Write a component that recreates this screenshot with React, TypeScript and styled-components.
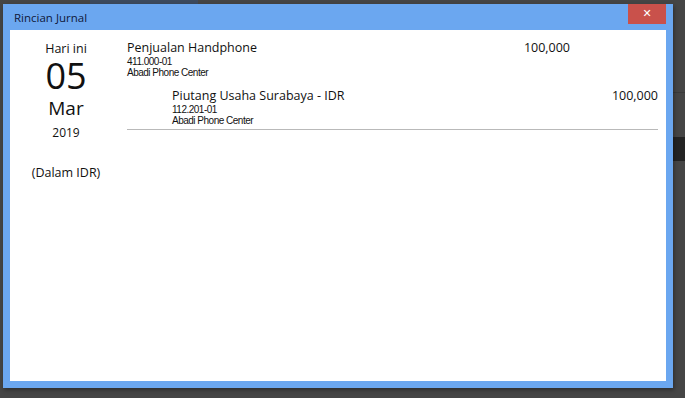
import styled, { createGlobalStyle } from "styled-components";

const GlobalStyle = createGlobalStyle`
  html, body {
    margin: 0;
    padding: 0;
    background: #464646;
    font-family: "Open Sans", "Noto Sans", "DejaVu Sans", sans-serif;
  }
`;

const Screen = styled.main`
  position: relative;
  width: 685px;
  height: 398px;
  overflow: hidden;
  background: #454545;
`;

const BackHeader = styled.div`
  display: flex;
  align-items: flex-end;
  height: 4px;
  overflow: hidden;
  padding-left: 90px;
  gap: 12px;
  .tab {
    width: 108px;
    height: 10px;
    margin-top: -6px;
    background: #3c4a5e;
  }
`;

const BackSide = styled.div`
  position: absolute;
  right: 0;
  top: 92px;
  width: 12px;
  display: flex;
  flex-direction: column;
  .italic {
    height: 44px;
    border-top: 1px solid #3a3a3a;
  }
  .bar {
    height: 24px;
    background: #232323;
  }
`;

const Dialog = styled.section`
  position: absolute;
  left: 3px;
  top: 4px;
  width: 670px;
  height: 384px;
  box-sizing: border-box;
  background: #6ba7f0;
  padding: 0 7px 7px 7px;
  display: flex;
  flex-direction: column;
  box-shadow: 1px 2px 4px rgba(0, 0, 0, 0.35);
`;

const TitleBar = styled.header`
  height: 26px;
  display: flex;
  align-items: center;
  justify-content: space-between;
  color: #10183a;
  font-size: 11.5px;
  padding-left: 4px;
`;

const CloseButton = styled.button`
  align-self: flex-start;
  width: 38px;
  height: 20px;
  border: none;
  padding: 0;
  background: #c9514b;
  color: #fff;
  font-family: "DejaVu Sans", sans-serif;
  font-size: 11px;
  line-height: 20px;
  cursor: pointer;
`;

const Body = styled.div`
  flex: 1;
  background: #fff;
  display: flex;
  padding-right: 8px;
`;

const DateColumn = styled.aside`
  width: 112px;
  display: flex;
  flex-direction: column;
  align-items: center;
  color: #111;
  padding-top: 13px;
`;

const Label = styled.div<{ $size: number; $mt?: number }>`
  font-size: ${(p) => p.$size}px;
  line-height: 1;
  margin-top: ${(p) => p.$mt ?? 0}px;
`;

const Entries = styled.div`
  flex: 1;
  margin-left: 5px;
  padding-top: 9px;
  padding-bottom: 3px;
  align-self: flex-start;
  display: flex;
  flex-direction: column;
  gap: 9px;
  border-bottom: 1px solid #b9b9b9;
`;

const EntryRow = styled.div<{ $indent: number }>`
  display: grid;
  grid-template-columns: 1fr 88px 88px;
  color: #111;
  .account {
    padding-left: ${(p) => p.$indent}px;
  }
  .name {
    font-size: 12.5px;
    line-height: 17px;
  }
  .sub {
    font-family: "Liberation Sans", Arial, sans-serif;
    font-size: 10px;
    line-height: 11px;
    letter-spacing: -0.5px;
  }
  .amount {
    font-size: 12.5px;
    line-height: 17px;
    text-align: right;
  }
`;

type Entry = {
  name: string;
  code: string;
  branch: string;
  debit?: string;
  credit?: string;
  indent: number;
};

const entries: Entry[] = [
  {
    name: "Penjualan Handphone",
    code: "411.000-01",
    branch: "Abadi Phone Center",
    debit: "100,000",
    indent: 0,
  },
  {
    name: "Piutang Usaha Surabaya - IDR",
    code: "112.201-01",
    branch: "Abadi Phone Center",
    credit: "100,000",
    indent: 45,
  },
];

function App() {
  return (
    <Screen>
      <GlobalStyle />
      <BackHeader>
        <div className="tab" />
      </BackHeader>
      <BackSide>
        <div className="italic" />
        <div className="bar" />
      </BackSide>
      <Dialog>
        <TitleBar>
          <span>Rincian Jurnal</span>
          <CloseButton aria-label="Tutup">✕</CloseButton>
        </TitleBar>
        <Body>
          <DateColumn>
            <Label $size={12.5}>Hari ini</Label>
            <Label $size={36} $mt={2}>05</Label>
            <Label $size={19} $mt={5}>Mar</Label>
            <Label $size={12} $mt={9}>2019</Label>
            <Label $size={12.5} $mt={28}>(Dalam IDR)</Label>
          </DateColumn>
          <Entries>
            {entries.map((e) => (
              <EntryRow key={e.code} $indent={e.indent}>
                <div className="account">
                  <div className="name">{e.name}</div>
                  <div className="sub">{e.code}</div>
                  <div className="sub">{e.branch}</div>
                </div>
                <div className="amount">{e.debit}</div>
                <div className="amount">{e.credit}</div>
              </EntryRow>
            ))}
          </Entries>
        </Body>
      </Dialog>
    </Screen>
  );
}

export default App;
